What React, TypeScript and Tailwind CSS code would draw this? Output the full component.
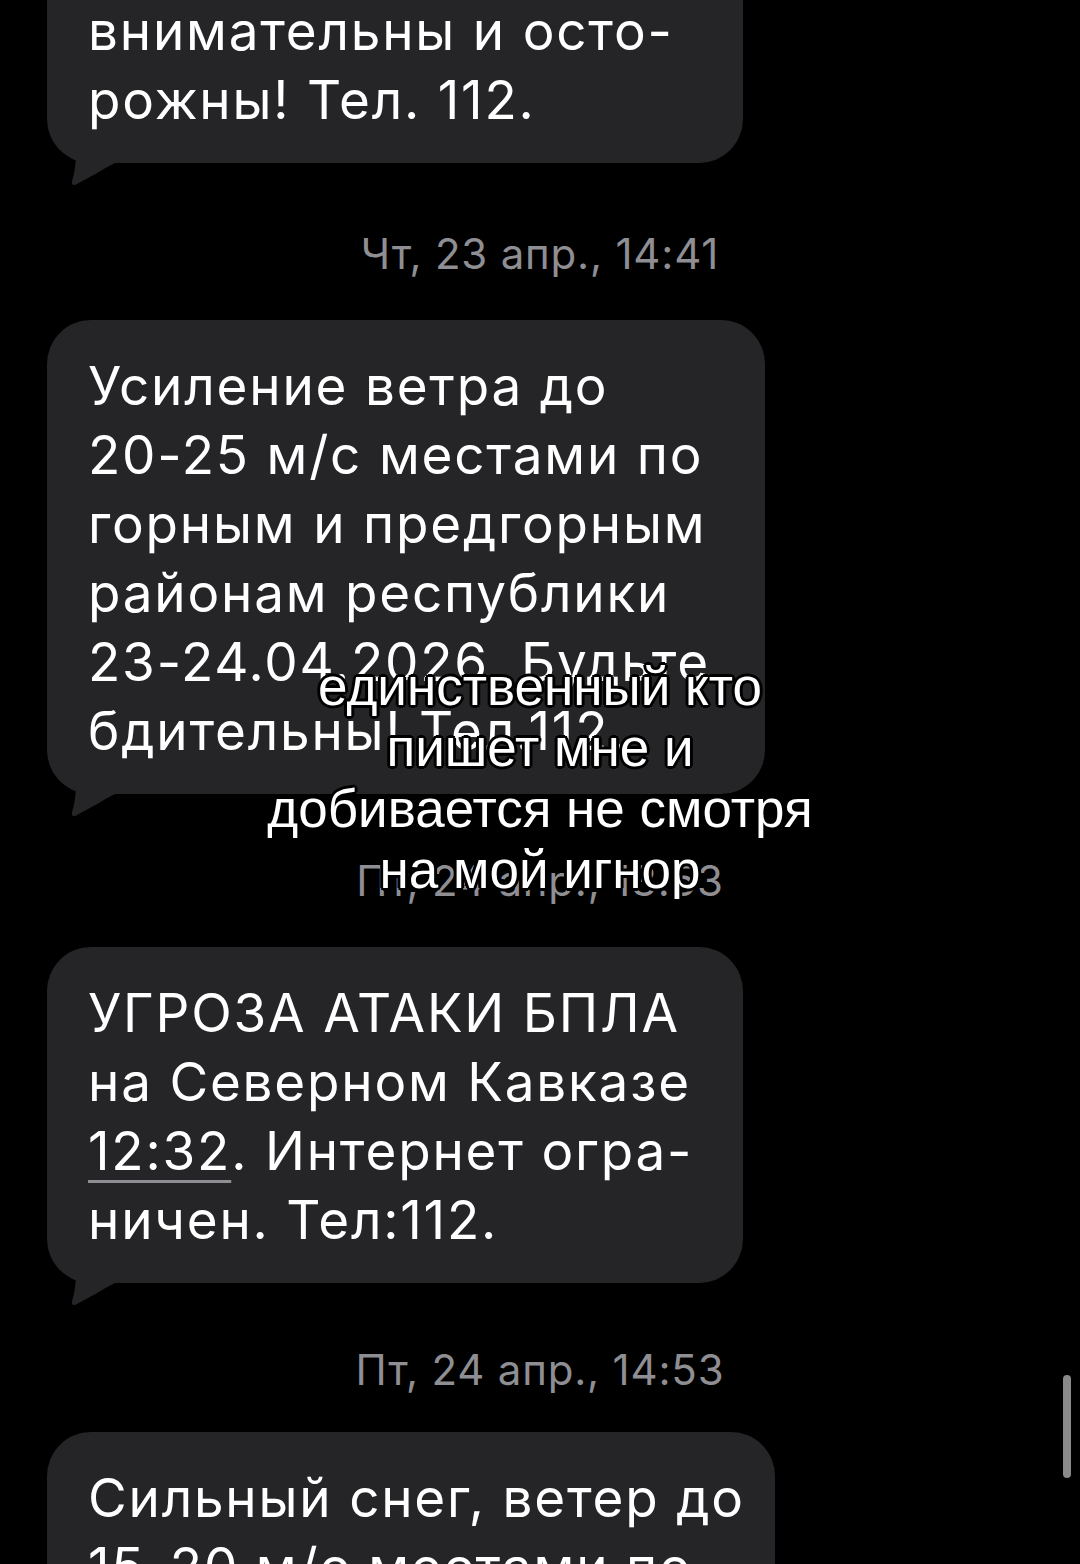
const bubbleFont = { fontFamily: 'Inter, "Noto Sans", sans-serif' };

function Tail() {
  return (
    <svg className="absolute left-0 bottom-[-24px] w-[70px] h-[74px]" viewBox="0 0 70 74" fill="#252527">
      <path d="M0,0 C2,22 14,36 29,40 C29,52 27,62 25,68 C24,72 27,73 30,71 C44,64 56,56 68,50 L70,50 L70,0 Z" />
    </svg>
  );
}

function Bubble({ width, lines }: { width: string; lines: React.ReactNode[] }) {
  return (
    <div className={`relative ${width} rounded-[44px] bg-[#252527] pl-[41px] pt-[32px] pb-[28px]`}>
      <Tail />
      <div className="relative text-[53px] leading-[69px] text-white tracking-[1.8px]" style={bubbleFont}>
        {lines.map((l, i) => (
          <div key={i} className="whitespace-nowrap">{l}</div>
        ))}
      </div>
    </div>
  );
}

function Stamp({ text, className }: { text: string; className: string }) {
  return (
    <div className={`text-center text-[42px] leading-[48px] tracking-[0.8px] text-[#8e8e93] ${className}`} style={bubbleFont}>
      {text}
    </div>
  );
}

export default function App() {
  return (
    <div className="relative h-[1564px] w-[1080px] overflow-hidden bg-black">
      <div className="pl-[47px] mt-[-173px]">
        <Bubble
          width="w-[696px]"
          lines={['местами до 20 м/с.', 'Будьте', 'внимательны и осто-', 'рожны! Тел. 112.']}
        />
      </div>
      <Stamp text="Чт, 23 апр., 14:41" className="mt-[67px] mb-[42px]" />
      <div className="pl-[47px]">
        <Bubble
          width="w-[718px]"
          lines={[
            'Усиление ветра до',
            '20-25 м/с местами по',
            'горным и предгорным',
            'районам республики',
            '23-24.04.2026. Будьте',
            'бдительны! Тел.112.',
          ]}
        />
      </div>
      <Stamp text="Пт, 24 апр., 13:53" className="mt-[63px] mb-[42px]" />
      <div className="pl-[47px]">
        <Bubble
          width="w-[696px]"
          lines={[
            'УГРОЗА АТАКИ БПЛА',
            'на Северном Кавказе',
            <span>
              <span className="underline decoration-[#8e8e93] decoration-[3px] underline-offset-[10px]">12:32</span>. Интернет огра-
            </span>,
            'ничен. Тел:112.',
          ]}
        />
      </div>
      <Stamp text="Пт, 24 апр., 14:53" className="mt-[63px] mb-[38px]" />
      <div className="pl-[47px]">
        <Bubble
          width="w-[728px]"
          lines={['Сильный снег, ветер до', '15-20 м/с местами по', 'горным районам']}
        />
      </div>

      {/* caption */}
      <div
        className="absolute left-0 right-0 top-[656px] text-center text-[53px] leading-[61px] text-white [text-shadow:-2px_-2px_0_#000,2px_-2px_0_#000,-2px_2px_0_#000,2px_2px_0_#000,0_3px_0_#000,0_-3px_0_#000,3px_0_0_#000,-3px_0_0_#000]"
        style={{ fontFamily: '"Liberation Sans", Arial, sans-serif' }}
      >
        <div>единственный кто</div>
        <div>пишет мне и</div>
        <div>добивается не смотря</div>
        <div>на мой игнор</div>
      </div>

      {/* scroll indicator */}
      <div className="absolute left-[1063px] top-[1375px] h-[103px] w-[8px] rounded-full bg-[#8a8a8a]" />
    </div>
  );
}
